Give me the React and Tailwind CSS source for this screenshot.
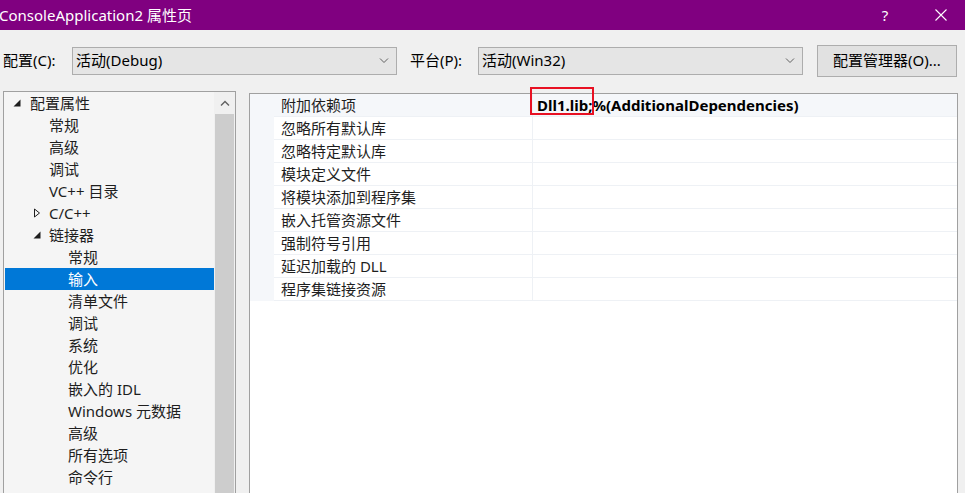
import React from "react";

const FONT = "font-['Segoe_UI','Noto_Sans','Noto_Sans_CJK_SC',sans-serif]";

const treeItems = [
  { label: "配置属性", level: 0, arrow: "open" },
  { label: "常规", level: 1 },
  { label: "高级", level: 1 },
  { label: "调试", level: 1 },
  { label: "VC++ 目录", level: 1 },
  { label: "C/C++", level: 1, arrow: "closed" },
  { label: "链接器", level: 1, arrow: "open" },
  { label: "常规", level: 2 },
  { label: "输入", level: 2, selected: true },
  { label: "清单文件", level: 2 },
  { label: "调试", level: 2 },
  { label: "系统", level: 2 },
  { label: "优化", level: 2 },
  { label: "嵌入的 IDL", level: 2 },
  { label: "Windows 元数据", level: 2 },
  { label: "高级", level: 2 },
  { label: "所有选项", level: 2 },
  { label: "命令行", level: 2 },
];

const props = [
  "附加依赖项",
  "忽略所有默认库",
  "忽略特定默认库",
  "模块定义文件",
  "将模块添加到程序集",
  "嵌入托管资源文件",
  "强制符号引用",
  "延迟加载的 DLL",
  "程序集链接资源",
];

const Chevron = () => (
  <svg width="10" height="6" viewBox="0 0 10 6" className="shrink-0">
    <path d="M1 0.5 L5 4.5 L9 0.5" fill="none" stroke="#606060" strokeWidth="1" />
  </svg>
);

const Combo = ({ value, className }) => (
  <div className={`h-[28px] bg-[#e5e5e5] border border-[#adadad] flex items-center pl-[3px] pr-[7px] ${className}`}>
    <span className="flex-1 text-[15px] text-black">{value}</span>
    <Chevron />
  </div>
);

const Arrow = ({ kind }) =>
  kind === "open" ? (
    <svg width="8" height="8" viewBox="0 0 8 8">
      <path d="M7.5 0.5 L7.5 7.5 L0.5 7.5 Z" fill="#1e1e1e" />
    </svg>
  ) : (
    <svg width="8" height="10" viewBox="0 0 8 10">
      <path d="M1.5 1 L6.5 5 L1.5 9 Z" fill="none" stroke="#1e1e1e" strokeWidth="1" />
    </svg>
  );

const TreeRow = ({ item }) => {
  const pad = item.level === 0 ? "pl-[25px]" : item.level === 1 ? "pl-[44px]" : "pl-[63px]";
  return (
    <div
      className={`relative h-[22px] flex items-center text-[15px] ${pad} ${
        item.selected ? "bg-[#0078d7] text-white" : "text-[#1e1e1e]"
      }`}
    >
      {item.arrow && (
        <span
          className={`absolute top-0 h-full flex items-center ${
            item.level === 0 ? "left-[8px]" : "left-[28px]"
          }`}
        >
          <Arrow kind={item.arrow} />
        </span>
      )}
      {item.label}
    </div>
  );
};

export default function App() {
  return (
    <div className={`w-[965px] h-[493px] overflow-hidden bg-[#f0f0f0] flex flex-col ${FONT}`}>
      {/* title bar */}
      <div className="h-[30px] shrink-0 bg-[#800080] flex items-center text-white text-[15px]">
        <span className="flex-1 -ml-[1px]">ConsoleApplication2 属性页</span>
        <span className="w-[20px] text-center mr-[40px]">?</span>
        <svg width="12" height="12" viewBox="0 0 12 12" className="mr-[18px]">
          <path d="M0.5 0.5 L11.5 11.5 M11.5 0.5 L0.5 11.5" stroke="#ffffff" strokeWidth="1.1" />
        </svg>
      </div>

      {/* toolbar */}
      <div className="h-[61px] shrink-0 flex items-center text-[15px] text-black">
        <span className="ml-[3px] w-[69px]">配置(C):</span>
        <Combo value="活动(Debug)" className="w-[325px]" />
        <span className="ml-[13px] w-[68px]">平台(P):</span>
        <Combo value="活动(Win32)" className="w-[325px]" />
        <button className="ml-[14px] w-[140px] h-[32px] bg-[#e1e1e1] border border-[#adadad] text-[15px] text-black">
          配置管理器(O)...
        </button>
      </div>

      {/* main */}
      <div className="flex-1 flex min-h-0">
        {/* tree */}
        <div className="ml-[3px] w-[233px] border border-[#a0a0a0] border-b-0 bg-[#f5f5f5] flex">
          <div className="flex-1 pl-[1px]">
            {treeItems.map((it, i) => (
              <TreeRow key={i} item={it} />
            ))}
          </div>
          <div className="w-[21px] bg-[#f0f0f0] flex flex-col">
            <div className="h-[22px] flex items-center justify-center">
              <svg width="10" height="6" viewBox="0 0 10 6">
                <path d="M1 5.5 L5 1.5 L9 5.5" fill="none" stroke="#606060" strokeWidth="1.4" />
              </svg>
            </div>
            <div className="flex-1 mx-[1px] bg-[#cdcdcd]" />
          </div>
        </div>

        {/* property grid */}
        <div className="ml-[13px] mt-[2px] w-[709px] border border-[#a0a0a0] border-b-0 bg-white">
          {props.map((p, i) => (
            <div key={i} className={`h-[23px] flex ${i === 0 ? "bg-[#f5f7fa]" : ""}`}>
              <div className="w-[24px] shrink-0 bg-[#f5f7fa]" />
              <div className="flex-1 flex border-b border-[#eef1f5]">
                <div className="w-[259px] shrink-0 border-r border-[#eef1f5] flex items-center pl-[7px] text-[15px] text-[#1e1e1e]">
                  {p}
                </div>
                <div className="flex-1 flex items-center pl-[4px] text-[15px] text-black font-bold">
                  {i === 0 && (
                    <span className="relative">
                      Dll1.lib;%(AdditionalDependencies)
                      <span className="absolute -left-[7px] -top-[7px] w-[64px] h-[28px] border-2 border-[#e81123]" />
                    </span>
                  )}
                </div>
              </div>
            </div>
          ))}
        </div>
      </div>
    </div>
  );
}
